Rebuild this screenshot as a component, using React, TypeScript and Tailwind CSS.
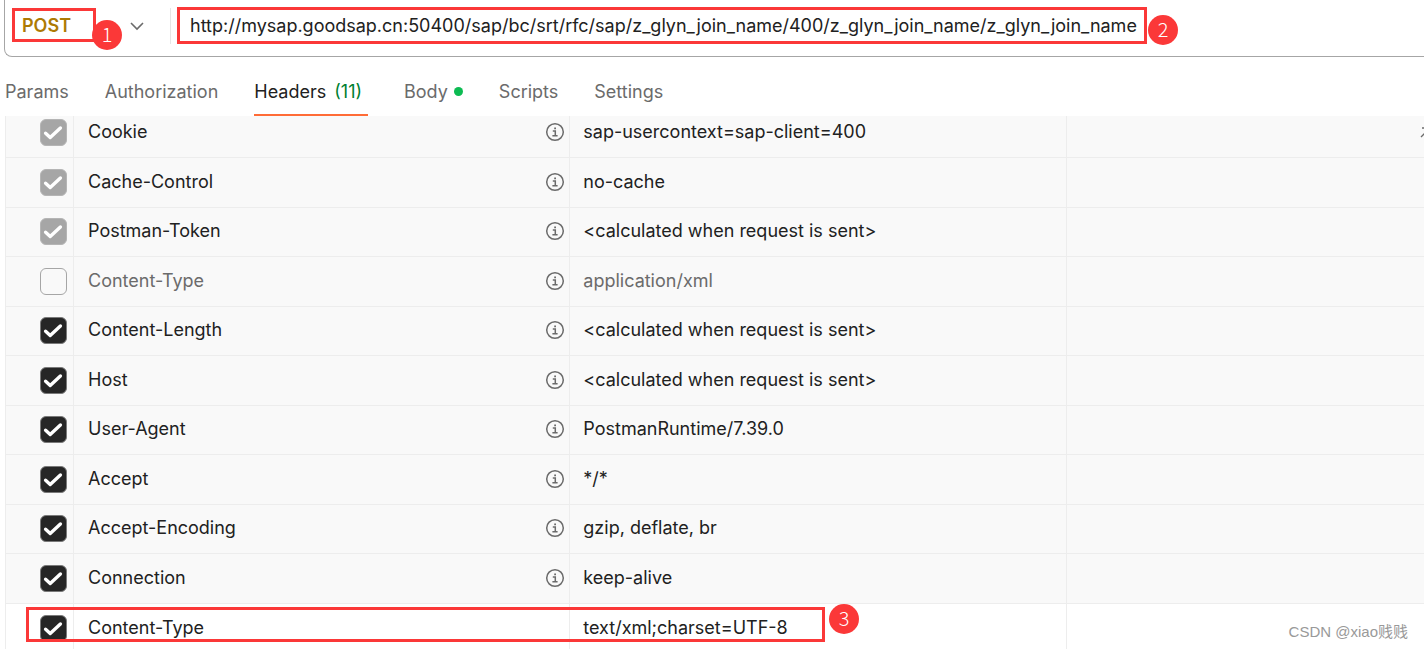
import React, { useState } from 'react';
import clsx from 'clsx';

type HeaderRow = {
  name: string;
  value: string;
  state: 'locked' | 'off' | 'on';
  custom?: boolean;
};

const initialRows: HeaderRow[] = [
  { name: 'Cookie', value: 'sap-usercontext=sap-client=400', state: 'locked' },
  { name: 'Cache-Control', value: 'no-cache', state: 'locked' },
  { name: 'Postman-Token', value: '<calculated when request is sent>', state: 'locked' },
  { name: 'Content-Type', value: 'application/xml', state: 'off' },
  { name: 'Content-Length', value: '<calculated when request is sent>', state: 'on' },
  { name: 'Host', value: '<calculated when request is sent>', state: 'on' },
  { name: 'User-Agent', value: 'PostmanRuntime/7.39.0', state: 'on' },
  { name: 'Accept', value: '*/*', state: 'on' },
  { name: 'Accept-Encoding', value: 'gzip, deflate, br', state: 'on' },
  { name: 'Connection', value: 'keep-alive', state: 'on' },
  { name: 'Content-Type', value: 'text/xml;charset=UTF-8', state: 'on', custom: true },
];

const tabs = ['Params', 'Authorization', 'Headers', 'Body', 'Scripts', 'Settings'];

// the first row is partly scrolled under the tabs
const rowHeight = (index: number) => {
  if (index === 0) return 'h-[42px]';
  return index % 2 ? 'h-[50px]' : 'h-[49px]';
};

function StepBadge({ step, className }: { step: number; className: string }) {
  return (
    <span
      className={clsx(
        "absolute flex h-[30px] w-[30px] items-center justify-center rounded-full bg-[#fb3838] pb-[2px] font-['Noto_Sans_CJK_SC',sans-serif] text-xl leading-none font-light text-white",
        className,
      )}
    >
      {step}
    </span>
  );
}

function InfoIcon() {
  return (
    <svg className="h-5 w-5" viewBox="0 0 20 20" fill="none" stroke="#6b6b6b" strokeWidth="1.5">
      <circle cx="10" cy="10" r="8.3" />
      <path d="M7.8 9h2.5v4.6M7.4 13.8h5.2" />
      <path d="M9.2 6.3h1.8" strokeWidth="1.8" />
    </svg>
  );
}

function CheckBox({ row, onToggle }: { row: HeaderRow; onToggle: () => void }) {
  return (
    <span className="relative block h-[27px] w-[27px]">
      <input
        type="checkbox"
        aria-label={`Send ${row.name}`}
        checked={row.state !== 'off'}
        disabled={row.state === 'locked'}
        onChange={onToggle}
        className={clsx(
          'block h-[27px] w-[27px] appearance-none rounded-md border',
          row.state === 'locked' && 'border-[#b5b5b5] bg-[#a6a6a6]',
          row.state === 'off' && 'border-[#a6a6a6] bg-[#f9f9f9]',
          row.state === 'on' && 'border-[#7a7a7a] bg-[#262626]',
        )}
      />
      {row.state !== 'off' && (
        <svg className="pointer-events-none absolute inset-0" viewBox="0 0 27 27" fill="none" stroke="white" strokeWidth="3.4">
          <path d="M5.6 14.2 L10.2 18.4 L20.4 9" strokeLinecap="round" strokeLinejoin="round" />
        </svg>
      )}
    </span>
  );
}

export default function App() {
  const [method, setMethod] = useState('POST');
  const [url, setUrl] = useState(
    'http://mysap.goodsap.cn:50400/sap/bc/srt/rfc/sap/z_glyn_join_name/400/z_glyn_join_name/z_glyn_join_name',
  );
  const [activeTab, setActiveTab] = useState('Headers');
  const [rows, setRows] = useState(initialRows);

  const toggleRow = (index: number) => {
    setRows(rows.map((r, i) => (i === index ? { ...r, state: r.state === 'on' ? 'off' : 'on' } : r)));
  };

  return (
    <div className="relative min-h-screen overflow-hidden bg-white font-[Inter,sans-serif] text-lg text-[#212121]">
      {/* REQUEST LINE */}
      <div className="ml-1 flex h-[57px] rounded-bl-lg border-b border-l border-[#a6a6a6] pt-2">
        <div className="relative ml-2 h-9 w-[158px] border-r border-[#e6e6e6]">
          <select
            aria-label="Method"
            value={method}
            onChange={(e) => setMethod(e.target.value)}
            className="h-9 w-full appearance-none bg-transparent pl-[9px] font-semibold text-[#ad7a03] outline-none"
          >
            <option>POST</option>
            <option>GET</option>
            <option>PUT</option>
          </select>
          <svg className="pointer-events-none absolute top-3 right-[25px] h-3 w-4" viewBox="0 0 16 12" fill="none" stroke="#6b6b6b" strokeWidth="1.6">
            <path d="M2 3l6 6 6-6" />
          </svg>
          <div className="pointer-events-none absolute top-0 -left-px h-[34px] w-[84px] border-3 border-[#fb3838]">
            <StepBadge step={1} className="top-[9px] left-[77px]" />
          </div>
        </div>
        <div className="relative -mt-px ml-[6px] h-[37px] w-[970px] border-3 border-[#fb3838]">
          <input
            type="text"
            aria-label="Request URL"
            value={url}
            onChange={(e) => setUrl(e.target.value)}
            className="h-full w-full pl-[10px] outline-none"
          />
          <StepBadge step={2} className="top-[5px] -right-[34px]" />
        </div>
      </div>

      {/* TABS */}
      <nav className="flex h-[59px] items-end gap-9 pl-[5px]">
        {tabs.map((tab) => (
          <button
            key={tab}
            type="button"
            onClick={() => setActiveTab(tab)}
            className={clsx(
              'flex h-[47px] items-center border-b-2',
              tab === activeTab ? 'border-[#ff6c37] pr-[6px]' : 'border-transparent text-[#6b6b6b]',
            )}
          >
            {tab}
            {tab === 'Headers' && <span className="ml-2 text-[#007f31]">(11)</span>}
            {tab === 'Body' && <span className="ml-[6px] h-[9px] w-[9px] rounded-full bg-[#0cbb52]" />}
          </button>
        ))}
      </nav>

      {/* HEADERS TABLE */}
      <div className="relative ml-[5px] border-l border-[#ededed]">
        <table className="w-full table-fixed border-separate border-spacing-0">
          <colgroup>
            <col className="w-[68px]" />
            <col className="w-[35%]" />
            <col className="w-[35%]" />
            <col />
          </colgroup>
          <tbody>
            {rows.map((row, i) => (
              <tr
                key={i}
                className={clsx(
                  '[&>td]:border-[#ededed] [&>td]:p-0 [&>td]:align-bottom',
                  rowHeight(i),
                  row.custom ? 'bg-white' : 'bg-[#f9f9f9] [&>td]:border-b',
                  row.state === 'off' && 'text-[#6b6b6b]',
                )}
              >
                <td className="border-r">
                  <div className="flex pb-[11px] pl-[34px]">
                    <CheckBox row={row} onToggle={() => toggleRow(i)} />
                  </div>
                </td>
                <td className="border-r">
                  <div className="flex h-[39px] items-start justify-between pr-1 pl-[14px]">
                    <span>{row.name}</span>
                    {!row.custom && (
                      <span className="pt-1">
                        <InfoIcon />
                      </span>
                    )}
                  </div>
                </td>
                <td className="border-r">
                  <div className="h-[39px] pl-[13px]">{row.value}</div>
                </td>
                <td>
                  {i === 0 && (
                    <div className="flex h-[39px] justify-end overflow-hidden pt-2">
                      <svg className="-mr-2 h-3 w-3 shrink-0" viewBox="0 0 12 12" fill="none" stroke="#6b6b6b" strokeWidth="1.4">
                        <path d="M1 11L11 1M2 2h9v9" />
                      </svg>
                    </div>
                  )}
                </td>
              </tr>
            ))}
          </tbody>
        </table>
        <div className="pointer-events-none absolute bottom-[11px] left-5 h-[35px] w-[799px] border-3 border-[#fb3838]">
          <StepBadge step={3} className="-top-[6px] -right-[37px]" />
        </div>
      </div>

      <span className="absolute right-4 bottom-[14px] font-['Liberation_Sans','Noto_Sans_CJK_SC',sans-serif] text-[15px] leading-none text-[#999999]">
        CSDN @xiao贱贱
      </span>
    </div>
  );
}
